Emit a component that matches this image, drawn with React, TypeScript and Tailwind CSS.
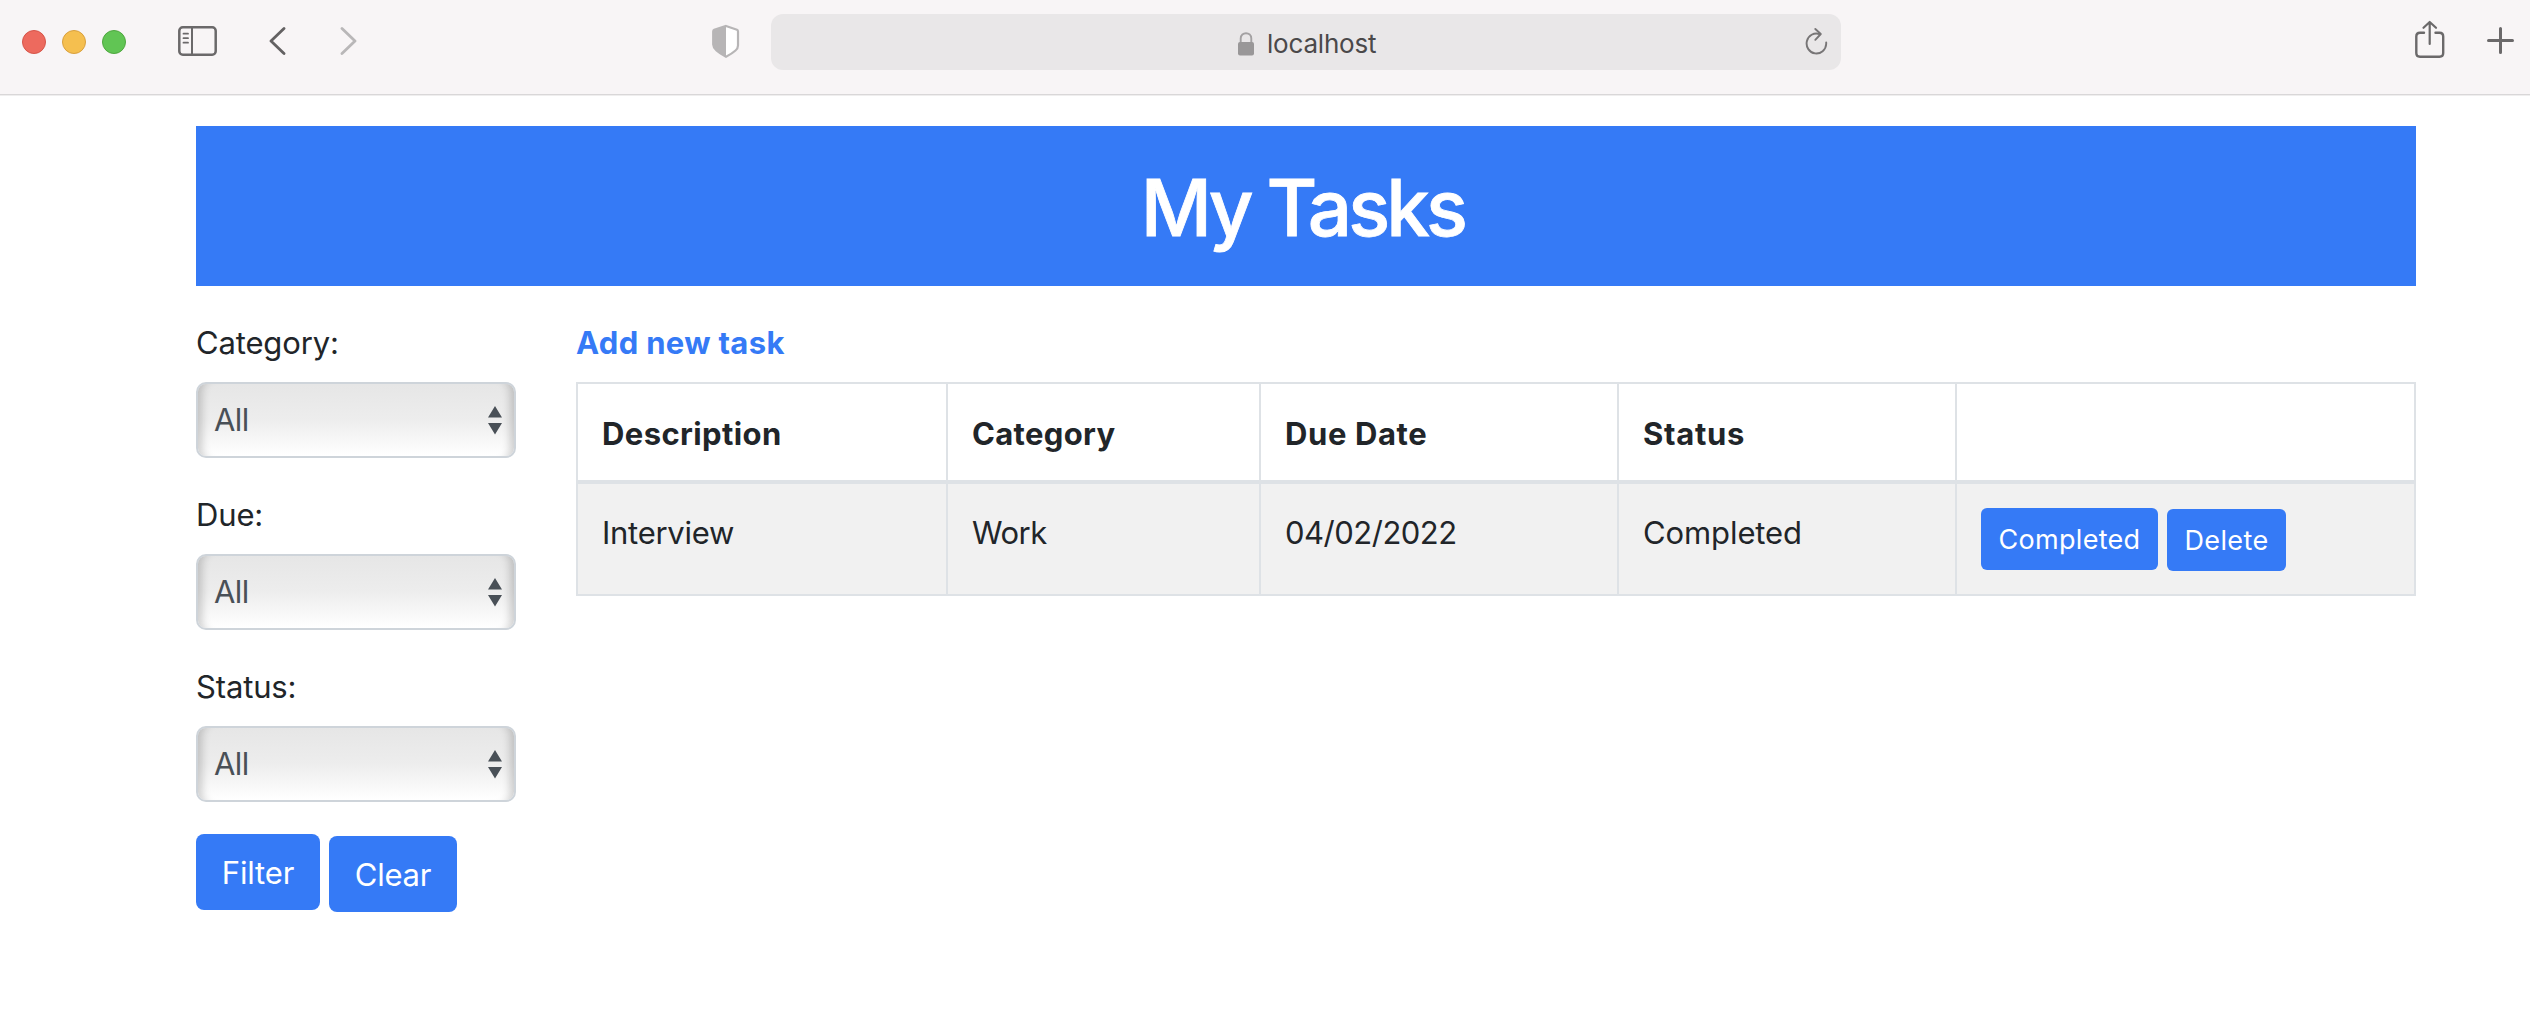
import React from 'react';

const FilterSelect = ({ label }: { label: string }) => (
  <div className="mb-8">
    <div className="mb-4 h-12 pt-px leading-[48px] tracking-[-0.15px] text-[#212529]">{label}</div>
    <div className="flex h-[76px] w-[320px] items-center justify-between rounded-[10px] border-2 border-[#ced4da] bg-linear-to-b from-[#e6e6e6] via-[#ededed] to-white pl-4 pr-[12px] text-[#495057] shadow-[inset_12px_0_8px_-8px_rgba(0,0,0,0.18),inset_-12px_0_8px_-8px_rgba(0,0,0,0.18)]">
      <span className="tracking-[-0.6px]">All</span>
      <svg width="14" height="30" viewBox="0 0 14 30" fill="#495057">
        <path d="M7 1L14 12.500H0ZM7 29.500L14 18H0Z" />
      </svg>
    </div>
  </div>
);

const Toolbar = () => (
  <header className="h-24 border-b border-[#efeeee]">
    <div className="flex h-[95px] items-start border-b border-[#d9d7d8] bg-[#f8f5f6]">
      <div className="ml-[22px] mt-[30px] flex gap-4">
        <span className="size-6 rounded-full border border-[#d65549] bg-[#ed6a5e]" />
        <span className="size-6 rounded-full border border-[#d9a03e] bg-[#f5bf4f]" />
        <span className="size-6 rounded-full border border-[#4fa73f] bg-[#61c554]" />
      </div>
      <svg className="ml-[52px] mt-[26px]" width="39" height="30" viewBox="0 0 39 30" fill="none" stroke="#6b696a" strokeWidth="2.500">
        <rect x="1.300" y="1.300" width="36.400" height="27.400" rx="3.500" />
        <path d="M14 1V29" strokeWidth="2" />
        <path d="M5.500 7.700H10M5.500 12.200H10M5.500 16.700H10" strokeWidth="1.800" strokeLinecap="round" />
      </svg>
      <svg className="ml-[52px] mt-[27px]" width="17" height="28" viewBox="0 0 17 28" fill="none" stroke="#636162" strokeWidth="2.800" strokeLinecap="round" strokeLinejoin="round">
        <path d="M15 1.500L2 14L15 26.500" />
      </svg>
      <svg className="ml-[54px] mt-[27px]" width="17" height="28" viewBox="0 0 17 28" fill="none" stroke="#b9b7b8" strokeWidth="2.800" strokeLinecap="round" strokeLinejoin="round">
        <path d="M2 1.500L15 14L2 26.500" />
      </svg>
      <svg className="ml-[355px] mt-[24px]" width="28" height="35" viewBox="0 0 28 35">
        <path d="M14 2L25 5.800Q26 6.200 26 7.400V21.500Q26 24.500 23.500 26.500Q20 29.700 14 32.700Q8 29.700 4.500 26.500Q1.200 23.500 1.200 20.500V7.400Q1.200 6.200 2.200 5.800Z" fill="white" stroke="#b7b5b6" strokeWidth="2.200" />
        <path d="M14 2L2.500 5.800Q1 6.200 1 7.400V21Q1 24 4.500 26.500Q8 29.700 14 32.700Z" fill="#b7b5b6" />
      </svg>
      <div className="ml-[31px] mt-[14px] flex h-14 w-[1070px] items-center rounded-xl bg-[#e9e7e8]">
        <svg className="ml-[467px] mt-[3px]" width="16" height="24" viewBox="0 0 16 24" fill="none">
          <path d="M2.700 11V6.500C2.700 -0.500 13.300 -0.500 13.300 6.500V11" stroke="#a3a1a2" strokeWidth="1.900" />
          <rect y="10" width="16" height="13.500" rx="2" fill="#999798" />
        </svg>
        <span className="ml-[13px] mt-[3px] text-[26px] leading-[56px] tracking-[-0.2px] text-[#4b494a]">localhost</span>
        <svg className="ml-auto mr-[13px]" width="23" height="34" viewBox="0 0 23 34" fill="none" stroke="#777576" strokeWidth="1.900" strokeLinecap="round" strokeLinejoin="round">
          <path d="M21.200 17.500V19A9.800 10 0 1 1 14.500 9" />
          <path d="M10.300 4L15.800 9L10.300 14.800" />
        </svg>
      </div>
      <svg className="ml-[574px] mt-[20px]" width="30" height="39" viewBox="0 0 30 39" fill="none" stroke="#6b696a" strokeWidth="2.400" strokeLinecap="round" strokeLinejoin="round">
        <path d="M9 12.800H5Q1.300 12.800 1.300 16.500V33Q1.300 36.700 5 36.700H24.500Q28.200 36.700 28.200 33V16.500Q28.200 12.800 24.500 12.800H20.500" />
        <path d="M14.700 24V2.500M8.500 7.800L14.700 2L21 7.800" strokeWidth="2.200" />
      </svg>
      <svg className="ml-[42px] mt-[27px]" width="27" height="27" viewBox="0 0 27 27" stroke="#6b696a" strokeWidth="3" strokeLinecap="round">
        <path d="M1.500 13.500H25.500M13.500 1.500V25.500" />
      </svg>
    </div>
  </header>
);

export default function App() {
  return (
    <div className="h-[1030px] overflow-hidden bg-white font-[Inter,sans-serif] text-[31px] leading-[48px] text-[#212529]">
      <Toolbar />
      <main className="ml-[196px] mt-[30px] w-[2220px]">
        <h1 className="flex h-40 items-center justify-center bg-[#357af6] pr-[7px] pt-1 text-[78px] font-medium leading-[96px] tracking-[-3.9px] text-white [-webkit-text-stroke:0.8px_white]">
          My Tasks
        </h1>
        <div className="mt-8 flex gap-[60px]">
          <aside className="w-[320px] shrink-0">
            <FilterSelect label="Category:" />
            <FilterSelect label="Due:" />
            <FilterSelect label="Status:" />
            <div className="flex gap-[9px] text-white">
              <button className="h-[76px] w-[124px] rounded-lg bg-[#357af6] pt-px tracking-[-0.14px]">Filter</button>
              <button className="mt-0.5 h-[76px] w-32 rounded-lg bg-[#357af6] pt-px tracking-[-0.2px]">Clear</button>
            </div>
          </aside>
          <section className="w-[1840px]">
            <a className="mb-4 block h-12 pt-px font-bold tracking-[0.33px] text-[#357af6]">Add new task</a>
            <div className="grid h-[214px] grid-cols-[370px_313px_358px_338px_457px] grid-rows-[100px_110px] border-2 border-[#dee2e6] *:border-[#dee2e6] *:pl-6">
              <div className="border-b-4 border-r-2 pt-[26px] font-bold tracking-[0.4px]">Description</div>
              <div className="border-b-4 border-r-2 pt-[26px] font-bold tracking-[0.34px]">Category</div>
              <div className="border-b-4 border-r-2 pt-[26px] font-bold tracking-[0.6px]">Due Date</div>
              <div className="border-b-4 border-r-2 pt-[26px] font-bold tracking-[0.7px]">Status</div>
              <div className="border-b-4" />
              <div className="border-r-2 bg-[#f1f1f1] pt-[25px] tracking-[-0.27px]">Interview</div>
              <div className="border-r-2 bg-[#f1f1f1] pt-[25px] tracking-[-0.5px]">Work</div>
              <div className="border-r-2 bg-[#f1f1f1] pt-[25px] tracking-[-0.5px]">04/02/2022</div>
              <div className="border-r-2 bg-[#f1f1f1] pt-[25px] tracking-[-0.1px]">Completed</div>
              <div className="flex gap-[9px] bg-[#f1f1f1] pt-6 text-[27px] leading-[42px] text-white">
                <button className="h-[62px] w-[177px] rounded-md bg-[#357af6] pt-0.5 tracking-[0.29px]">Completed</button>
                <button className="mt-px h-[62px] w-[119px] rounded-md bg-[#357af6] pt-0.5 tracking-[0.38px]">Delete</button>
              </div>
            </div>
          </section>
        </div>
      </main>
    </div>
  );
}
